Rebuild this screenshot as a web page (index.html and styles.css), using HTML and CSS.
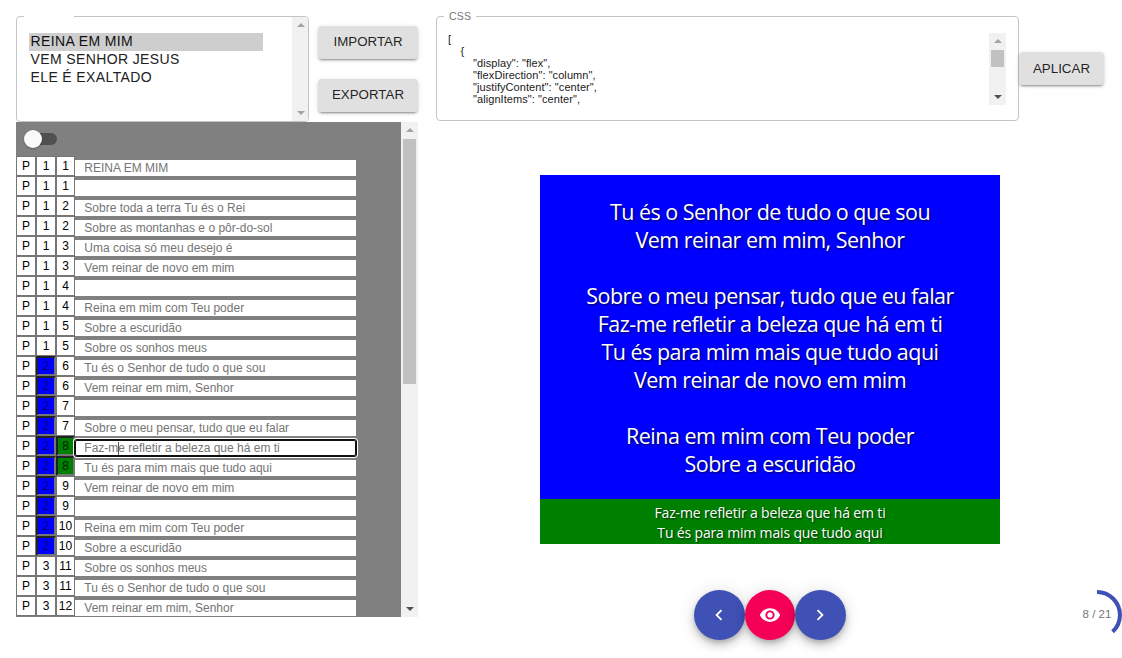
FILE: index.html
```html
<!DOCTYPE html>
<html lang="pt-BR">
<head>
<meta charset="utf-8">
<title>Letras</title>
<link rel="stylesheet" href="styles.css">
</head>
<body>
<div class="app">
  <aside class="side">
    <div class="top">
      <div class="songs">
        <ul class="song-list"><li class="current">REINA EM MIM</li><li>VEM SENHOR JESUS</li><li>ELE É EXALTADO</li></ul>
        <div class="bar"><i class="up"></i><i class="down"></i></div>
        <span class="notch"></span>
      </div>
      <div class="actions"><button class="btn">IMPORTAR</button><button class="btn">EXPORTAR</button></div>
    </div>
    <div class="editor">
      <div class="panel">
        <div class="switch"><span class="track"></span><span class="thumb"></span></div>
        <div class="row"><b>P</b><b>1</b><b>1</b><p>REINA EM MIM</p></div>
        <div class="row"><b>P</b><b>1</b><b>1</b><p></p></div>
        <div class="row"><b>P</b><b>1</b><b>2</b><p>Sobre toda a terra Tu és o Rei</p></div>
        <div class="row"><b>P</b><b>1</b><b>2</b><p>Sobre as montanhas e o pôr-do-sol</p></div>
        <div class="row"><b>P</b><b>1</b><b>3</b><p>Uma coisa só meu desejo é</p></div>
        <div class="row"><b>P</b><b>1</b><b>3</b><p>Vem reinar de novo em mim</p></div>
        <div class="row"><b>P</b><b>1</b><b>4</b><p></p></div>
        <div class="row"><b>P</b><b>1</b><b>4</b><p>Reina em mim com Teu poder</p></div>
        <div class="row"><b>P</b><b>1</b><b>5</b><p>Sobre a escuridão</p></div>
        <div class="row"><b>P</b><b>1</b><b>5</b><p>Sobre os sonhos meus</p></div>
        <div class="row"><b>P</b><b class="blue">2</b><b>6</b><p>Tu és o Senhor de tudo o que sou</p></div>
        <div class="row"><b>P</b><b class="blue">2</b><b>6</b><p>Vem reinar em mim, Senhor</p></div>
        <div class="row"><b>P</b><b class="blue">2</b><b>7</b><p></p></div>
        <div class="row"><b>P</b><b class="blue">2</b><b>7</b><p>Sobre o meu pensar, tudo que eu falar</p></div>
        <div class="row"><b>P</b><b class="blue">2</b><b class="green">8</b><p class="focus">Faz-m<span class="caret"></span>e refletir a beleza que há em ti</p></div>
        <div class="row"><b>P</b><b class="blue">2</b><b class="green">8</b><p>Tu és para mim mais que tudo aqui</p></div>
        <div class="row"><b>P</b><b class="blue">2</b><b>9</b><p>Vem reinar de novo em mim</p></div>
        <div class="row"><b>P</b><b class="blue">2</b><b>9</b><p></p></div>
        <div class="row"><b>P</b><b class="blue">2</b><b>10</b><p>Reina em mim com Teu poder</p></div>
        <div class="row"><b>P</b><b class="blue">2</b><b>10</b><p>Sobre a escuridão</p></div>
        <div class="row"><b>P</b><b>3</b><b>11</b><p>Sobre os sonhos meus</p></div>
        <div class="row"><b>P</b><b>3</b><b>11</b><p>Tu és o Senhor de tudo o que sou</p></div>
        <div class="row"><b>P</b><b>3</b><b>12</b><p>Vem reinar em mim, Senhor</p></div>
      </div>
      <div class="bar"><i class="up"></i><i class="grip tall"></i><i class="down dark"></i></div>
    </div>
  </aside>
  <main class="main">
    <div class="style-row">
      <div class="code-box">
        <span class="label">CSS</span>
        <pre class="code">[
    {
        "display": "flex",
        "flexDirection": "column",
        "justifyContent": "center",
        "alignItems": "center",</pre>
        <div class="bar"><i class="up"></i><i class="grip short"></i><i class="down dark"></i></div>
      </div>
      <button class="btn apply">APLICAR</button>
    </div>
    <section class="slide">
      <div class="verse"><p>Tu és o Senhor de tudo o que sou</p><p>Vem reinar em mim, Senhor</p><p></p><p>Sobre o meu pensar, tudo que eu falar</p><p>Faz-me refletir a beleza que há em ti</p><p>Tu és para mim mais que tudo aqui</p><p>Vem reinar de novo em mim</p><p></p><p>Reina em mim com Teu poder</p><p>Sobre a escuridão</p></div>
      <div class="caption"><p>Faz-me refletir a beleza que há em ti</p><p>Tu és para mim mais que tudo aqui</p></div>
    </section>
    <footer class="controls">
      <div class="fabs">
        <button class="fab"><svg viewBox="0 0 24 24"><path d="M15.41 7.41L14 6l-6 6 6 6 1.41-1.41L10.83 12z"/></svg></button>
        <button class="fab pink"><svg viewBox="0 0 24 24"><path d="M12 4.5C7 4.5 2.73 7.61 1 12c1.73 4.39 6 7.5 11 7.5s9.27-3.11 11-7.5c-1.73-4.39-6-7.5-11-7.5zM12 17c-2.76 0-5-2.24-5-5s2.24-5 5-5 5 2.24 5 5-2.24 5-5 5zm0-8c-1.66 0-3 1.34-3 3s1.34 3 3 3 3-1.34 3-3-1.34-3-3-3z"/></svg></button>
        <button class="fab"><svg viewBox="0 0 24 24"><path d="M10 6L8.59 7.41 13.17 12l-4.58 4.59L10 18l6-6z"/></svg></button>
      </div>
      <div class="progress"><svg viewBox="0 0 44 44"><circle cx="22" cy="22" r="20.2" pathLength="21" stroke-dasharray="8 21"/></svg><span>8 / 21</span></div>
    </footer>
  </main>
</div>
</body>
</html>
```
FILE: styles.css
```css
* { box-sizing: border-box; }
body { margin: 0; background: #fff; font-family: "Liberation Sans", Arial, sans-serif; overflow: hidden; }
p, ul, pre { margin: 0; padding: 0; }
button { font-family: inherit; border: 0; }
.app { display: flex; width: 1122px; height: 658px; padding: 16px 0 0 16px; }
.side { width: 402px; flex: none; }
.top { display: flex; height: 106px; }
.songs { position: relative; display: flex; justify-content: space-between; width: 293px; height: 106px; border: 1px solid #c4c4c4; border-radius: 4px; }
.song-list { list-style: none; width: 234px; margin: 16px 0 0 12px; font-size: 14px; line-height: 18px; letter-spacing: .38px; color: #212121; }
.song-list li { height: 18px; padding-left: 1.5px; line-height: 17px; }
.song-list .current { background: #cecece; color: #101010; }
.notch { position: absolute; left: 7px; top: -1px; width: 50px; height: 1px; background: #fff; }
.actions { display: flex; flex-direction: column; gap: 20px; padding: 10px 0 0 9px; }
.btn { width: 100px; height: 33px; padding: 0 0 2px; border-radius: 4px; background: #e0e0e0; color: rgba(0,0,0,.87); font-size: 13.33px; box-shadow: 0 3px 1px -2px rgba(0,0,0,.2), 0 2px 2px rgba(0,0,0,.14), 0 1px 5px rgba(0,0,0,.12); }

.bar { position: relative; width: 17px; flex: none; background: #f1f1f1; }
.songs .bar { width: 16px; border-radius: 0 3px 3px 0; }
.up, .down { position: absolute; left: 5px; border: 4px solid transparent; border-top-width: 0; border-bottom: 4px solid #a3a3a3; top: 6px; }
.down { top: auto; bottom: 6px; border-bottom-width: 0; border-top: 4px solid #a3a3a3; }
.dark { border-top-color: #505050; }
.grip { position: absolute; left: 2px; top: 17px; width: 13px; background: #c1c1c1; }
.tall { height: 245px; }
.short { height: 17px; }

.editor { display: flex; height: 495px; }
.panel { width: 385px; background: #808080; overflow: hidden; }
.switch { position: relative; height: 34px; }
.track { position: absolute; left: 13px; top: 11px; width: 28px; height: 12px; border-radius: 6px; background: #505050; }
.thumb { position: absolute; left: 8px; top: 8px; width: 18px; height: 18px; border-radius: 50%; background: #fafafa; box-shadow: 0 1px 2px rgba(0,0,0,.3); }
.row { display: flex; height: 20px; }
.row b { width: 20px; height: 20px; border: 1px solid #767676; background: #fff; font-size: 12px; line-height: 18px; font-weight: 400; text-align: center; color: #000; white-space: nowrap; }
.row b:nth-child(3) { width: 19px; }
.row b.blue, .row b.green { border-width: 2px; border-color: #222 #767676 #767676 #222; line-height: 16px; }
.row b.blue { background: #00f; color: #000070; }
.row b.green { background: green; color: #002000; }
.row p { width: 281px; height: 16px; margin-top: 4px; padding-left: 9.3px; background: #fff; color: #757575; font-size: 12px; line-height: 16px; white-space: pre; }
.row p.focus { position: relative; z-index: 1; border-radius: 2px; box-shadow: inset 0 0 0 1px #101010, 0 0 0 1px #101010, 0 0 0 2px #fff; }
.caret { display: inline-block; width: 1px; height: 13px; margin-right: -1px; background: #555; vertical-align: -3px; }

.main { width: 704px; }
.style-row { display: flex; align-items: flex-start; padding-left: 18px; height: 159px; }
.code-box { position: relative; display: flex; justify-content: space-between; width: 583px; height: 105px; padding: 16px 12px 15px 11px; border: 1px solid #c4c4c4; border-radius: 4px; }
.code { font-family: inherit; font-size: 11px; line-height: 12px; letter-spacing: .07px; color: #212121; }
.label { position: absolute; left: 7px; top: -7px; width: 32px; padding-left: 5px; background: #fff; font-size: 10.5px; line-height: 13px; letter-spacing: .2px; color: #757575; }
.apply { width: 85px; margin-top: 36px; padding: 0; position: relative; }
.slide { width: 460px; height: 369px; margin-left: 122px; color: #fff; text-align: center; font-family: "Open Sans", sans-serif; white-space: nowrap; text-shadow: 1px 1px 2px rgba(0,0,0,.7); }
.verse { height: 324px; padding-top: 23px; background: #00f; font-size: 21.5px; line-height: 28px; letter-spacing: -.52px; }
.verse p { height: 28px; }
.caption { height: 45px; padding-top: 4px; background: green; font-size: 14px; line-height: 20px; letter-spacing: -.16px; }
.controls { display: flex; justify-content: space-between; margin-top: 46px; padding-left: 276px; }
.fabs { display: flex; }
.fab { display: flex; align-items: center; justify-content: center; width: 50.6px; height: 50px; padding: 0; border-radius: 50%; background: #3f51b5; box-shadow: 0 3px 5px -1px rgba(0,0,0,.2), 0 6px 10px rgba(0,0,0,.14), 0 1px 18px rgba(0,0,0,.12); }
.pink { background: #f50057; }
.fab svg { width: 22px; height: 22px; fill: #fff; }
.progress { position: relative; width: 50px; height: 50px; flex: none; }
.progress svg { display: block; width: 50px; height: 50px; transform: rotate(-90deg); }
.progress circle { fill: none; stroke: #3f51b5; stroke-width: 3.6; }
.progress span { position: absolute; inset: 0; font-size: 11.5px; line-height: 49px; text-align: center; color: #757575; }
```
